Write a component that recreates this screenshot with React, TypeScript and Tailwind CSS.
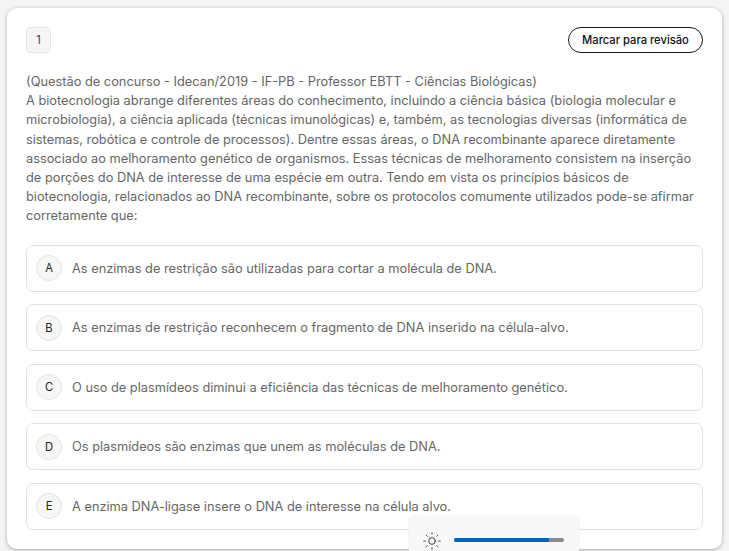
import { Sun } from "lucide-react";

const options = [
  { letter: "A", text: "As enzimas de restrição são utilizadas para cortar a molécula de DNA." },
  { letter: "B", text: "As enzimas de restrição reconhecem o fragmento de DNA inserido na célula-alvo." },
  { letter: "C", text: "O uso de plasmídeos diminui a eficiência das técnicas de melhoramento genético." },
  { letter: "D", text: "Os plasmídeos são enzimas que unem as moléculas de DNA." },
  { letter: "E", text: "A enzima DNA-ligase insere o DNA de interesse na célula alvo." },
];

export default function App() {
  return (
    <div className="relative h-[551px] w-[729px] overflow-hidden bg-[#f4f4f4] pl-[7px] pr-[7px] pt-[8px] font-['Inter',sans-serif]">
      <div className="h-[541px] rounded-[10px] bg-white px-[19px] pt-[19px] shadow-[0_1px_4px_rgba(0,0,0,0.3)]">
        <div className="flex items-center justify-between">
          <div className="flex h-[26px] w-[25px] items-center justify-center rounded-[5px] border border-[#e3e3e3] bg-[#f6f6f6] text-[11.2px] text-[#444444]">
            1
          </div>
          <button className="flex h-[26px] w-[135px] items-center justify-center rounded-full border border-[#1a1a1a] bg-white text-[11.2px] font-medium text-[#111111]">
            Marcar para revisão
          </button>
        </div>

        <p className="mt-[19px] text-[12.8px] leading-[19.2px] text-[#666666]">
          (Questão de concurso - Idecan/2019 - IF-PB - Professor EBTT - Ciências Biológicas)
          <br />
          A biotecnologia abrange diferentes áreas do conhecimento, incluindo a ciência básica (biologia molecular e
          microbiologia), a ciência aplicada (técnicas imunológicas) e, também, as tecnologias diversas (informática de
          sistemas, robótica e controle de processos). Dentre essas áreas, o DNA recombinante aparece diretamente
          associado ao melhoramento genético de organismos. Essas técnicas de melhoramento consistem na inserção de
          porções do DNA de interesse de uma espécie em outra. Tendo em vista os princípios básicos de biotecnologia,
          relacionados ao DNA recombinante, sobre os protocolos comumente utilizados pode-se afirmar corretamente que:
        </p>

        <div className="mt-[19.2px] flex flex-col gap-[12.7px]">
          {options.map((o) => (
            <div
              key={o.letter}
              className="flex h-[46.8px] items-center gap-[10px] rounded-[7px] border border-[#e2e2e2] bg-white pl-[9px]"
            >
              <span className="flex h-[26px] w-[26px] items-center justify-center rounded-full border border-[#e3e3e3] bg-[#f6f6f6] pt-px text-[11.2px] text-[#222222]">
                {o.letter}
              </span>
              <span className="text-[12.8px] text-[#666666]">{o.text}</span>
            </div>
          ))}
        </div>
      </div>

      <div className="absolute left-[409px] top-[516px] flex h-[50px] w-[170px] items-start gap-[12px] rounded-[8px] bg-[#f8f8f8] pl-[13px] pt-[15px] shadow-[0_0_2px_rgba(0,0,0,0.12)]">
        <Sun className="h-[20px] w-[20px] text-[#222222]" strokeWidth={1} />
        <div className="mt-[7px] h-[4px] w-[110px] overflow-hidden rounded-full bg-[#8a8a8a]">
          <div className="h-full w-[95px] bg-[#0067c0]" />
        </div>
      </div>
    </div>
  );
}
